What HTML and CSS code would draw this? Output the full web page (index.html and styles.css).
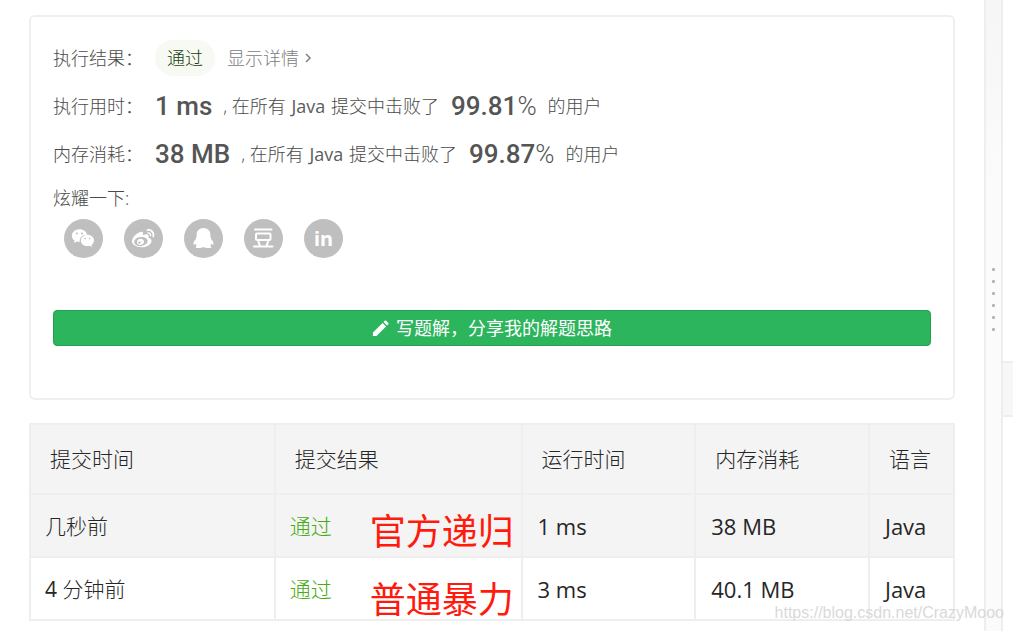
FILE: index.html
```html
<!DOCTYPE html>
<html lang="zh-CN">
<head>
<meta charset="utf-8">
<title>提交记录</title>
<link rel="stylesheet" href="styles.css">
</head>
<body>
<div class="layout">
  <main class="pane">
    <section class="card">
      <div class="line">
        <span class="label">执行结果：</span>
        <span class="badge">通过</span>
        <a class="detail" href="#">显示详情
          <svg class="chevron" viewBox="0 0 8 12"><path d="M2 2l4 4-4 4"/></svg>
        </a>
      </div>
      <div class="line">
        <span class="label">执行用时：</span>
        <span class="figure">1 ms</span>
        <span class="phrase">, 在所有 <span class="latin">Java</span> 提交中击败了</span>
        <span class="figure">99.81<span class="percent">%</span></span>
        <span class="phrase">的用户</span>
      </div>
      <div class="line">
        <span class="label">内存消耗：</span>
        <span class="figure">38 MB</span>
        <span class="phrase">, 在所有 <span class="latin">Java</span> 提交中击败了</span>
        <span class="figure">99.87<span class="percent">%</span></span>
        <span class="phrase">的用户</span>
      </div>
      <div class="share-title">炫耀一下:</div>
      <div class="share">
        <button class="round" type="button" aria-label="微信">
          <svg viewBox="0 0 39 39">
            <path class="solid" d="M15.500 10.200c-4.300 0-7.600 2.900-7.600 6.500 0 2 1 3.700 2.700 4.900l-.8 2.400 2.800-1.400c1 .3 1.900.4 3.200.4-.9-4.300 2.800-7.600 7.300-7.300-.7-3.200-3.700-5.500-7.600-5.500z"/>
            <path class="solid" d="M23.500 15.700c-3.800 0-6.700 2.500-6.700 5.700s2.900 5.700 6.700 5.700c.8 0 1.500-.1 2.200-.3l2.300 1.200-.6-2c1.500-1.100 2.600-2.700 2.600-4.600 0-3.200-2.900-5.700-6.500-5.700z"/>
            <g class="hole"><circle cx="12.900" cy="14.600" r="1"/><circle cx="18" cy="14.600" r="1"/><circle cx="21.200" cy="19.600" r=".8"/><circle cx="25.700" cy="19.600" r=".8"/></g>
          </svg>
        </button>
        <button class="round" type="button" aria-label="微博">
          <svg viewBox="0 0 39 39">
            <path class="solid" transform="translate(8 8) scale(.93)" d="M10.098 20.323c-3.977.391-7.414-1.406-7.672-4.020-.259-2.609 2.759-5.047 6.740-5.441 3.979-.394 7.413 1.404 7.671 4.018.259 2.600-2.759 5.049-6.737 5.439zM9.050 17.219c-.384.616-1.208.884-1.829.602-.612-.279-.793-.991-.406-1.593.379-.595 1.176-.861 1.793-.601.622.263.820.972.442 1.592zm1.270-1.627c-.141.237-.449.353-.689.253-.236-.090-.313-.361-.177-.586.138-.227.436-.346.672-.240.239.090.315.360.180.601zm.190-2.747c-1.893-.493-4.033.450-4.857 2.118-.836 1.704-.026 3.591 1.886 4.210 1.983.640 4.318-.341 5.132-2.179.800-1.793-.201-3.642-2.161-4.149zm7.549-1.196c-.346-.105-.570-.180-.405-.615.375-.977.420-1.804 0-2.404-.781-1.112-2.915-1.053-5.364-.030 0 0-.766.331-.571-.271.376-1.217.315-2.224-.270-2.809-1.338-1.337-4.869.045-7.888 3.080C1.309 10.870 0 13.273 0 15.348c0 3.981 5.099 6.395 10.086 6.395 6.536 0 10.888-3.801 10.888-6.820 0-1.822-1.547-2.854-2.915-3.284zM19.967 6.557c-.766-.856-1.908-1.187-2.960-.962-.436.090-.706.511-.616.932.090.420.511.691.932.602.511-.105 1.067.044 1.442.465.376.421.466.977.316 1.473-.136.406.089.856.510.992.405.119.857-.105.992-.512.330-1.021.120-2.178-.646-3.035zM22.385 4.362c-1.576-1.757-3.905-2.419-6.054-1.968-.496.104-.812.587-.706 1.081.104.496.586.813 1.082.707 1.532-.331 3.185.150 4.296 1.383 1.112 1.246 1.429 2.943.947 4.416-.165.480.106 1.007.586 1.157.479.165.991-.104 1.157-.586.675-2.088.241-4.478-1.338-6.235z"/>
          </svg>
        </button>
        <button class="round" type="button" aria-label="QQ">
          <svg viewBox="0 0 39 39">
            <path class="solid" d="M19.500 9c-4.300 0-6.900 3-6.900 6.700v2c-.7.800-.9 1.500-.7 2.200-1.600 1.700-2.600 3.700-2.500 5.200.1 1 .9.900 1.900-.5.300 1 .9 1.900 1.700 2.500-1 .3-1.500.8-1.300 1.300.5 1 5.800.9 7.800-.4 2 1.300 7.300 1.400 7.800.4.200-.5-.3-1-1.300-1.300.8-.6 1.400-1.500 1.700-2.500 1 1.400 1.800 1.500 1.900.5.100-1.500-.9-3.500-2.500-5.200.2-.7 0-1.400-.7-2.200v-2c0-3.700-2.600-6.700-6.900-6.700z"/>
          </svg>
        </button>
        <button class="round" type="button" aria-label="豆瓣">
          <svg viewBox="0 0 39 39">
            <g class="stroke"><path d="M11 10.500h16.500M10 27.400h18.500M14.500 22.800l1.500 4M24 22.800l-1.500 4"/><rect x="12" y="14.500" width="14.500" height="6.500" rx="1"/></g>
          </svg>
        </button>
        <button class="round linked" type="button">in</button>
      </div>
      <button class="write" type="button">
        <svg class="pencil" viewBox="0 0 18 18"><path d="M1 17v-3.700L11.200 3.100l3.700 3.700L4.700 17zM12.200 2.100l1.400-1.400c.4-.4.900-.4 1.300 0l2.400 2.400c.4.400.4.900 0 1.300l-1.400 1.400z"/></svg>
        写题解，分享我的解题思路
      </button>
    </section>
    <table class="history">
      <thead>
        <tr><th class="c-time">提交时间</th><th class="c-result">提交结果</th><th class="c-run">运行时间</th><th class="c-run">内存消耗</th><th>语言</th></tr>
      </thead>
      <tbody>
        <tr class="shaded"><td>几秒前</td><td class="pass">通过<span class="note">官方递归</span></td><td>1 ms</td><td>38 MB</td><td>Java</td></tr>
        <tr><td><span class="latin">4</span> 分钟前</td><td class="pass">通过<span class="note low">普通暴力</span></td><td>3 ms</td><td>40.1 MB</td><td>Java</td></tr>
      </tbody>
    </table>
  </main>
  <div class="splitter"><i></i><i></i><i></i><i></i><i></i><i></i></div>
  <aside class="side"><div class="side-bar"></div></aside>
</div>
<div class="watermark">https://blog.csdn.net/CrazyMooo</div>
</body>
</html>
```
FILE: styles.css
```css
* { box-sizing: border-box; }
body {
  margin: 0;
  background: #fff;
  color: #4a4a4a;
  font: 300 18px/24px "Open Sans", "Noto Sans CJK SC", sans-serif;
}
button { font: inherit; padding: 0; border: 0; cursor: pointer; }
.layout { display: flex; min-height: 100vh; }
.pane { flex: 1; padding: 15px 29px 0; }

.card {
  border: 2px solid #efefef;
  border-radius: 6px;
  padding: 17px 22px 52px;
  display: flex;
  flex-direction: column;
}
.line { display: flex; align-items: center; height: 48px; white-space: nowrap; }
.label { width: 102px; }
.badge {
  padding: 6px 12px;
  margin-right: 12px;
  border-radius: 18px;
  background: #f6faf3;
  color: #1c3a0c;
}
.detail { display: flex; align-items: center; gap: 5px; color: #808080; text-decoration: none; }
.chevron { width: 8px; height: 12px; fill: none; stroke: #808080; stroke-width: 1.5; }
.figure { font: 500 26px/32px Roboto, sans-serif; margin-right: 11px; color: #555; }
.percent { font-weight: 300; }
.phrase { margin-right: 12px; }
.latin { font-weight: 400; }
.phrase .latin { margin: 0 1px; color: #5c5c5c; }
.share-title { line-height: 40px; height: 41px; }
.share { display: flex; gap: 21px; padding-left: 11px; margin-bottom: 52px; }
.round { width: 39px; height: 39px; border-radius: 50%; background: #bfbfbf; color: #fff; }
.round svg { display: block; width: 100%; }
.solid { fill: #fff; }
.hole { fill: #bfbfbf; }
.stroke { fill: none; stroke: #fff; stroke-width: 2; stroke-linecap: round; }
.linked { font: 700 20px/36px "Noto Sans", sans-serif; }
.write {
  display: flex;
  align-items: center;
  justify-content: center;
  gap: 7px;
  height: 36px;
  border: 1px solid #27a052;
  border-radius: 4px;
  background: #2db55d;
  color: #fff;
  font-weight: 400;
}
.pencil { width: 17px; height: 17px; fill: #fff; }

.history {
  width: 100%;
  margin-top: 23px;
  border-collapse: collapse;
  table-layout: fixed;
  color: #262626;
  font-size: 21px;
  line-height: 30px;
}
.history th, .history td { border: 2px solid #eee; text-align: left; font-weight: 300; }
.history th { padding: 19px; background: #f4f4f4; }
.history td { padding: 16px 14px 15px 15px; font-size: 22px; font-weight: 400; }
.history td:first-child, .history .pass { padding-left: 14px; font-size: 21px; font-weight: 300; }
.shaded { background: #f4f4f4; }
.c-time { width: 26.5%; }
.c-result { width: 26.7%; }
.c-run { width: 18.8%; }
.history .pass { position: relative; color: #45ab12; }
.note {
  position: absolute;
  left: 94px;
  top: 12px;
  color: #ff1a0d;
  font: 400 36px/44px "Noto Sans CJK SC", sans-serif;
  white-space: nowrap;
}
.low { top: 17px; }

.splitter {
  width: 19px;
  border: solid #eee;
  border-width: 0 2px;
  background: linear-gradient(#f6f6f6, #fbfbfb 30%);
  display: flex;
  flex-direction: column;
  align-items: center;
  justify-content: center;
  gap: 9px;
  padding-bottom: 32px;
}
.splitter i { width: 3px; height: 3px; border-radius: 1px; background: #b5b5b5; }
.side { width: 10px; display: flex; flex-direction: column; justify-content: center; padding-top: 147px; }
.side-bar { height: 56px; background: #f7f7f7; border: solid #eee; border-width: 2px 0; }
.watermark {
  position: absolute;
  right: 9px;
  bottom: 8px;
  color: #d9d9d9;
  font: 400 16px/20px "Liberation Sans", sans-serif;
}
```
